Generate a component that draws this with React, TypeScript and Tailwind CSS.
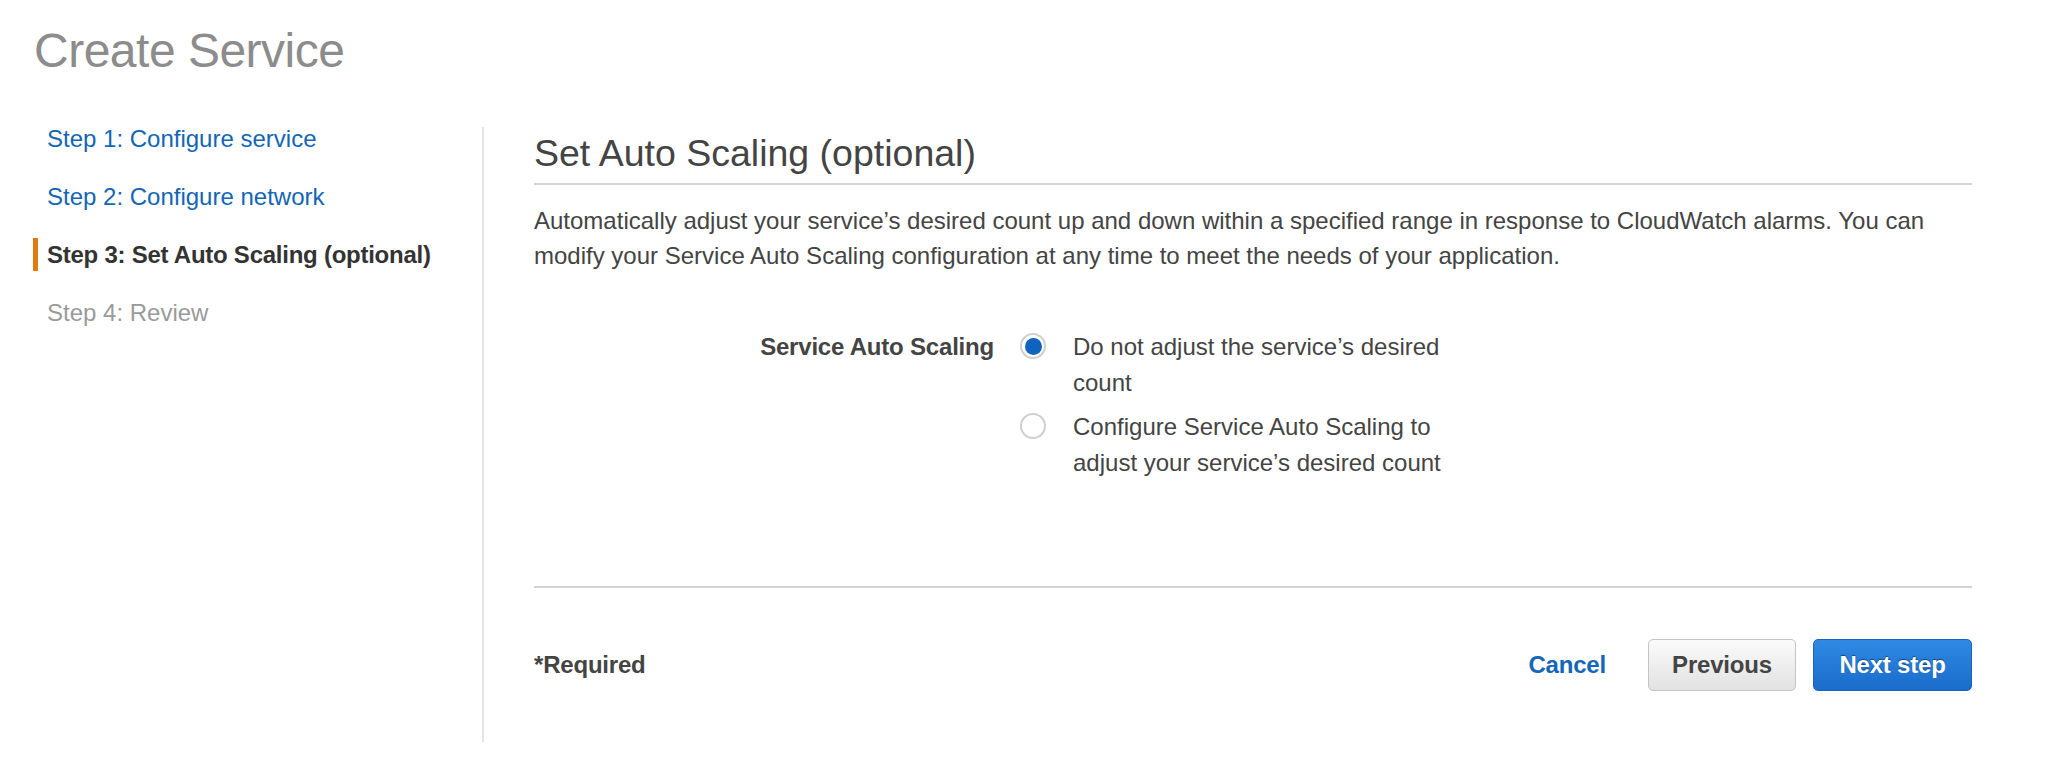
import type { ReactNode } from "react";

const steps = [
  { label: "Step 1: Configure service", state: "done" },
  { label: "Step 2: Configure network", state: "done" },
  { label: "Step 3: Set Auto Scaling (optional)", state: "active" },
  { label: "Step 4: Review", state: "todo" },
] as const;

function Radio({ checked }: { checked?: boolean }) {
  return (
    <span className="mt-[4px] flex h-[26px] w-[26px] shrink-0 items-center justify-center rounded-full border-2 border-[#cfcfcf] bg-white">
      {checked && <span className="h-[17px] w-[17px] rounded-full bg-[#0f62bd]" />}
    </span>
  );
}

function Opcao({ checked, children }: { checked?: boolean; children: ReactNode }) {
  return (
    <label className="flex items-start gap-[27px]">
      <Radio checked={checked} />
      <span className="w-[390px] leading-[36px]">{children}</span>
    </label>
  );
}

export default function App() {
  return (
    <div className="h-[764px] w-full overflow-hidden bg-white font-['Liberation_Sans',Arial,sans-serif] text-[24px] text-[#444]">
      <h1 className="pl-[34px] pt-[27px] text-[48px] leading-[48px] tracking-[-0.5px] text-[#8c8c8c]">
        Create Service
      </h1>

      <div className="mt-[47px] flex">
        {/* passos */}
        <nav className="flex w-[482px] shrink-0 flex-col gap-[25px]">
          {steps.map((s) =>
            s.state === "active" ? (
              <span
                key={s.label}
                className="ml-[33px] h-[33px] border-l-[5px] border-[#e17a0c] pl-[9px] font-bold leading-[33px] tracking-[-0.25px] text-[#333]"
              >
                {s.label}
              </span>
            ) : (
              <span
                key={s.label}
                className={`ml-[33px] h-[33px] pl-[14px] leading-[33px] ${
                  s.state === "done" ? "text-[#1266b5]" : "text-[#9a9a9a]"
                }`}
              >
                {s.label}
              </span>
            )
          )}
        </nav>

        <main className="mt-[5px] flex h-[615px] flex-1 flex-col border-l-2 border-[#e4e4e4] pb-[51px] pl-[50px] pr-[76px]">
          <h2 className="border-b-2 border-[#d4d4d4] pb-[10px] pt-[6px] text-[37.5px] leading-[40px] text-[#444]">
            Set Auto Scaling (optional)
          </h2>

          <p className="mt-[18px] leading-[35px]">
            Automatically adjust your service’s desired count up and down within a specified range in
            response to CloudWatch alarms. You can modify your Service Auto Scaling configuration at any
            time to meet the needs of your application.
          </p>

          <div className="mt-[56px] flex items-start gap-[26px]">
            <span className="w-[460px] text-right font-bold leading-[36px] tracking-[-0.2px] text-[#444]">
              Service Auto Scaling
            </span>
            <div className="flex flex-col gap-[8px]">
              <Opcao checked>Do not adjust the service’s desired count</Opcao>
              <Opcao>Configure Service Auto Scaling to adjust your service’s desired count</Opcao>
            </div>
          </div>

          <div className="mt-auto border-t-2 border-[#d4d4d4]" />

          <footer className="mt-[51px] flex h-[52px] items-center">
            <span className="font-bold tracking-[-0.2px] text-[#444]">*Required</span>
            <div className="ml-auto flex items-center">
              <button className="mr-[42px] font-bold tracking-[-0.2px] text-[#1466b8]">Cancel</button>
              <button className="h-[52px] w-[148px] rounded-[5px] border border-[#c4c4c4] bg-gradient-to-b from-[#fbfbfb] to-[#e2e2e2] font-bold tracking-[-0.2px] text-[#444]">
                Previous
              </button>
              <button className="ml-[17px] h-[52px] w-[159px] rounded-[5px] border border-[#1b63bd] bg-gradient-to-b from-[#2f8ae4] to-[#1a6cca] font-bold tracking-[-0.2px] text-white [text-shadow:0_-1px_1px_rgba(0,0,0,0.45)]">
                Next step
              </button>
            </div>
          </footer>
        </main>
      </div>
    </div>
  );
}
